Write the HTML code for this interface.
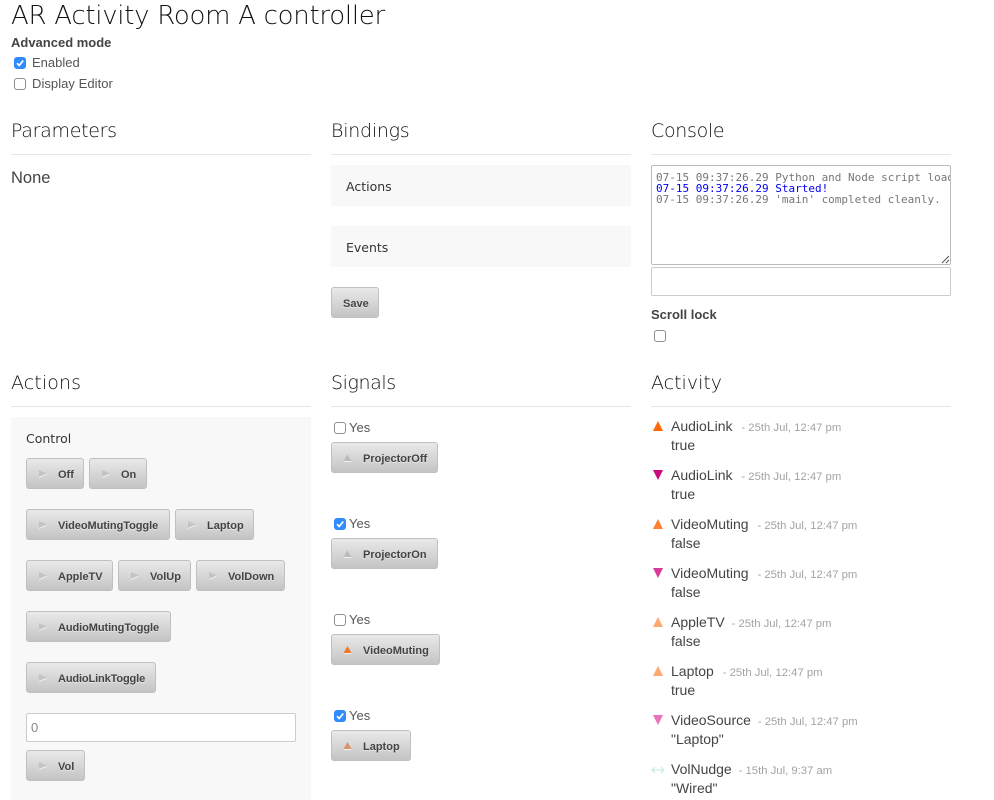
<!DOCTYPE html>
<html><head><meta charset="utf-8"><style>
html,body{margin:0;padding:0;background:#fff;width:994px;height:800px;overflow:hidden}
body{position:relative;font-family:"Liberation Sans",sans-serif;color:#444;font-size:14px}
.a{position:absolute;white-space:nowrap;line-height:1}
.h{font-family:"DejaVu Sans",sans-serif;font-weight:200;color:#111;font-size:19px;top:0}
.hr{position:absolute;height:1px;background:#e6e6e6;width:300px}
.panel{position:absolute;background:#f8f8f8}
.b{position:absolute;box-sizing:border-box;height:31px;border:1px solid #c0c0c0;border-radius:3px;background:linear-gradient(#e9e9e9,#c4c4c4);font-weight:bold;font-size:11px;color:#444;line-height:29px;white-space:nowrap;text-shadow:0 1px 0 rgba(255,255,255,.45)}
.b i{position:absolute;display:block;line-height:0;left:11px;top:10px;filter:drop-shadow(0 1px 0 rgba(255,255,255,.7))}
.b span{position:absolute;left:31px;top:2px}
.cb{position:absolute;box-sizing:border-box;width:12px;height:12px;border:1px solid #8f8f8f;border-radius:3px;background:#fff}
.cb.on{background:#2f8cff;border-color:#2f8cff}
.cb svg{position:absolute;left:-1px;top:-1px}
.inp{position:absolute;box-sizing:border-box;background:#fff;border:1px solid #ccc;border-radius:2px}
.k{position:absolute;font-size:14px;color:#444;white-space:nowrap;line-height:1}
.t{font-size:11.3px;color:#a3a3a3;margin-left:5px}
.con{font-family:"DejaVu Sans Mono","Liberation Mono",monospace;font-size:11px;line-height:11px;white-space:nowrap;color:#777}
.s{font-family:"DejaVu Sans",sans-serif;font-size:12.5px;color:#333}
</style></head><body>
<div class="a" style="left:11px;top:1px;font-family:'DejaVu Sans',sans-serif;font-weight:200;font-size:26px;color:#111;line-height:31px;letter-spacing:-.28px">AR Activity Room A controller</div>
<div class="a" style="left:11px;top:36px;font-size:13px;font-weight:bold;color:#444">Advanced mode</div>
<div class="cb on" style="left:14px;top:57px"><svg width="12" height="12" viewBox="0 0 12 12"><path d="M3 6.2l2.2 2.3L9.2 3.6" fill="none" stroke="#fff" stroke-width="1.7"/></svg></div>
<div class="a" style="left:32px;top:56px;font-size:13px;color:#555">Enabled</div>
<div class="cb" style="left:14px;top:78px"></div>
<div class="a" style="left:32px;top:77px;font-size:13px;color:#555;letter-spacing:.05px">Display Editor</div>

<div class="a h" style="left:11px;top:122px;letter-spacing:-.3px">Parameters</div><div class="hr" style="left:11px;top:154px"></div>
<div class="a" style="left:11px;top:170px;font-size:16.5px;color:#444">None</div>

<div class="a h" style="left:331px;top:122px;letter-spacing:-.25px">Bindings</div><div class="hr" style="left:331px;top:154px"></div>
<div class="panel" style="left:331px;top:165px;width:300px;height:41px"></div>
<div class="a s" style="left:346px;top:181px">Actions</div>
<div class="panel" style="left:331px;top:226px;width:300px;height:41px"></div>
<div class="a s" style="left:346px;top:242px">Events</div>
<div class="b" style="left:331px;top:287px;width:48px"><span style="left:11px">Save</span></div>

<div class="a h" style="left:651px;top:122px;letter-spacing:-.3px">Console</div><div class="hr" style="left:651px;top:154px"></div>
<div class="inp" style="left:651px;top:165px;width:300px;height:100px;border-color:#bbb;overflow:hidden">
<div class="con" style="position:absolute;left:4px;top:6px;width:294px;overflow:hidden">07-15 09:37:26.29 Python and Node script loaded<br><span style="color:#00e">07-15 09:37:26.29 Started!</span><br>07-15 09:37:26.29 'main' completed cleanly.</div>
<svg style="position:absolute;right:0;bottom:0" width="9" height="9"><path d="M1 8L8 1M5 8L8 5" stroke="#555" stroke-width="1" fill="none"/></svg></div>
<div class="inp" style="left:651px;top:267px;width:300px;height:29px"></div>
<div class="a" style="left:651px;top:308px;font-size:13px;font-weight:bold">Scroll lock</div>
<div class="cb" style="left:654px;top:330px"></div>

<div class="a h" style="left:11px;top:374px;letter-spacing:.1px">Actions</div><div class="hr" style="left:11px;top:406px"></div>
<div class="panel" style="left:11px;top:417px;width:300px;height:383px"></div>
<div class="a s" style="left:26px;top:433px">Control</div>

<div class="b" style="left:26px;top:458px;width:58px"><i><svg width="9" height="9"><path d="M1 1L9 4.5L1 8z" fill="#c4c4c4"/></svg></i><span>Off</span></div>
<div class="b" style="left:89px;top:458px;width:58px"><i><svg width="9" height="9"><path d="M1 1L9 4.5L1 8z" fill="#c4c4c4"/></svg></i><span>On</span></div>
<div class="b" style="left:26px;top:509px;width:144px"><i><svg width="9" height="9"><path d="M1 1L9 4.5L1 8z" fill="#c4c4c4"/></svg></i><span style="letter-spacing:-.05px">VideoMutingToggle</span></div>
<div class="b" style="left:175px;top:509px;width:79px"><i><svg width="9" height="9"><path d="M1 1L9 4.5L1 8z" fill="#c4c4c4"/></svg></i><span>Laptop</span></div>
<div class="b" style="left:26px;top:560px;width:87px"><i><svg width="9" height="9"><path d="M1 1L9 4.5L1 8z" fill="#c4c4c4"/></svg></i><span>AppleTV</span></div>
<div class="b" style="left:118px;top:560px;width:73px"><i><svg width="9" height="9"><path d="M1 1L9 4.5L1 8z" fill="#c4c4c4"/></svg></i><span>VolUp</span></div>
<div class="b" style="left:196px;top:560px;width:89px"><i><svg width="9" height="9"><path d="M1 1L9 4.5L1 8z" fill="#c4c4c4"/></svg></i><span>VolDown</span></div>
<div class="b" style="left:26px;top:611px;width:145px"><i><svg width="9" height="9"><path d="M1 1L9 4.5L1 8z" fill="#c4c4c4"/></svg></i><span style="letter-spacing:-.08px">AudioMutingToggle</span></div>
<div class="b" style="left:26px;top:662px;width:130px"><i><svg width="9" height="9"><path d="M1 1L9 4.5L1 8z" fill="#c4c4c4"/></svg></i><span style="letter-spacing:-.13px">AudioLinkToggle</span></div>
<div class="inp" style="left:26px;top:713px;width:270px;height:29px"></div>
<div class="a" style="left:31px;top:721px;font-size:13px;color:#888">0</div>
<div class="b" style="left:26px;top:750px;width:59px"><i><svg width="9" height="9"><path d="M1 1L9 4.5L1 8z" fill="#c4c4c4"/></svg></i><span>Vol</span></div>

<div class="a h" style="left:331px;top:374px;letter-spacing:-.4px">Signals</div><div class="hr" style="left:331px;top:406px"></div>
<div class="cb" style="left:334px;top:422px"></div><div class="a" style="left:349px;top:421px;font-size:13px;color:#555">Yes</div>
<div class="b" style="left:331px;top:442px;width:107px"><i><svg width="9" height="9"><path d="M.5 8L4.5 1L8.5 8z" fill="#bdbdbd"/></svg></i><span>ProjectorOff</span></div>
<div class="cb on" style="left:334px;top:518px"><svg width="12" height="12" viewBox="0 0 12 12"><path d="M3 6.2l2.2 2.3L9.2 3.6" fill="none" stroke="#fff" stroke-width="1.7"/></svg></div><div class="a" style="left:349px;top:517px;font-size:13px;color:#555">Yes</div>
<div class="b" style="left:331px;top:538px;width:107px"><i><svg width="9" height="9"><path d="M.5 8L4.5 1L8.5 8z" fill="#bdbdbd"/></svg></i><span>ProjectorOn</span></div>
<div class="cb" style="left:334px;top:614px"></div><div class="a" style="left:349px;top:613px;font-size:13px;color:#555">Yes</div>
<div class="b" style="left:331px;top:634px;width:109px"><i><svg width="9" height="9"><path d="M.5 8L4.5 1L8.5 8z" fill="#f07a28"/></svg></i><span>VideoMuting</span></div>
<div class="cb on" style="left:334px;top:710px"><svg width="12" height="12" viewBox="0 0 12 12"><path d="M3 6.2l2.2 2.3L9.2 3.6" fill="none" stroke="#fff" stroke-width="1.7"/></svg></div><div class="a" style="left:349px;top:709px;font-size:13px;color:#555">Yes</div>
<div class="b" style="left:331px;top:730px;width:80px"><i><svg width="9" height="9"><path d="M.5 8L4.5 1L8.5 8z" fill="#d9946a"/></svg></i><span>Laptop</span></div>

<div class="a h" style="left:651px;top:374px">Activity</div><div class="hr" style="left:651px;top:406px"></div>

<svg class="a" style="left:652px;top:421px" width="12" height="10"><path d="M1 10L6 0L11 10z" fill="#ff6a00"/></svg>
<div class="k" style="left:671px;top:419px">AudioLink <span class="t">- 25th Jul, 12:47 pm</span></div><div class="k" style="left:671px;top:438px">true</div>
<svg class="a" style="left:652px;top:470px" width="12" height="10"><path d="M1 0L6 10L11 0z" fill="#c90a7c"/></svg>
<div class="k" style="left:671px;top:468px">AudioLink <span class="t">- 25th Jul, 12:47 pm</span></div><div class="k" style="left:671px;top:487px">true</div>
<svg class="a" style="left:652px;top:519px" width="12" height="10"><path d="M1 10L6 0L11 10z" fill="#ff8030"/></svg>
<div class="k" style="left:671px;top:517px">VideoMuting <span class="t">- 25th Jul, 12:47 pm</span></div><div class="k" style="left:671px;top:536px">false</div>
<svg class="a" style="left:652px;top:568px" width="12" height="10"><path d="M1 0L6 10L11 0z" fill="#d93a99"/></svg>
<div class="k" style="left:671px;top:566px">VideoMuting <span class="t">- 25th Jul, 12:47 pm</span></div><div class="k" style="left:671px;top:585px">false</div>
<svg class="a" style="left:652px;top:617px" width="12" height="10"><path d="M1 10L6 0L11 10z" fill="#ffa970"/></svg>
<div class="k" style="left:671px;top:615px">AppleTV <span class="t" style="margin-left:3px">- 25th Jul, 12:47 pm</span></div><div class="k" style="left:671px;top:634px">false</div>
<svg class="a" style="left:652px;top:666px" width="12" height="10"><path d="M1 10L6 0L11 10z" fill="#ffa970"/></svg>
<div class="k" style="left:671px;top:664px">Laptop <span class="t">- 25th Jul, 12:47 pm</span></div><div class="k" style="left:671px;top:683px">true</div>
<svg class="a" style="left:652px;top:715px" width="12" height="10"><path d="M1 0L6 10L11 0z" fill="#ea72b8"/></svg>
<div class="k" style="left:671px;top:713px">VideoSource <span class="t" style="margin-left:3px">- 25th Jul, 12:47 pm</span></div><div class="k" style="left:671px;top:732px">"Laptop"</div>
<svg class="a" style="left:651px;top:766px" width="14" height="8"><path d="M1 4H13M4 1L1 4L4 7M10 1L13 4L10 7" fill="none" stroke="#bfe8e4" stroke-width="1"/></svg>
<div class="k" style="left:671px;top:762px">VolNudge <span class="t" style="margin-left:3px">- 15th Jul, 9:37 am</span></div><div class="k" style="left:671px;top:781px">"Wired"</div>
</body></html>
